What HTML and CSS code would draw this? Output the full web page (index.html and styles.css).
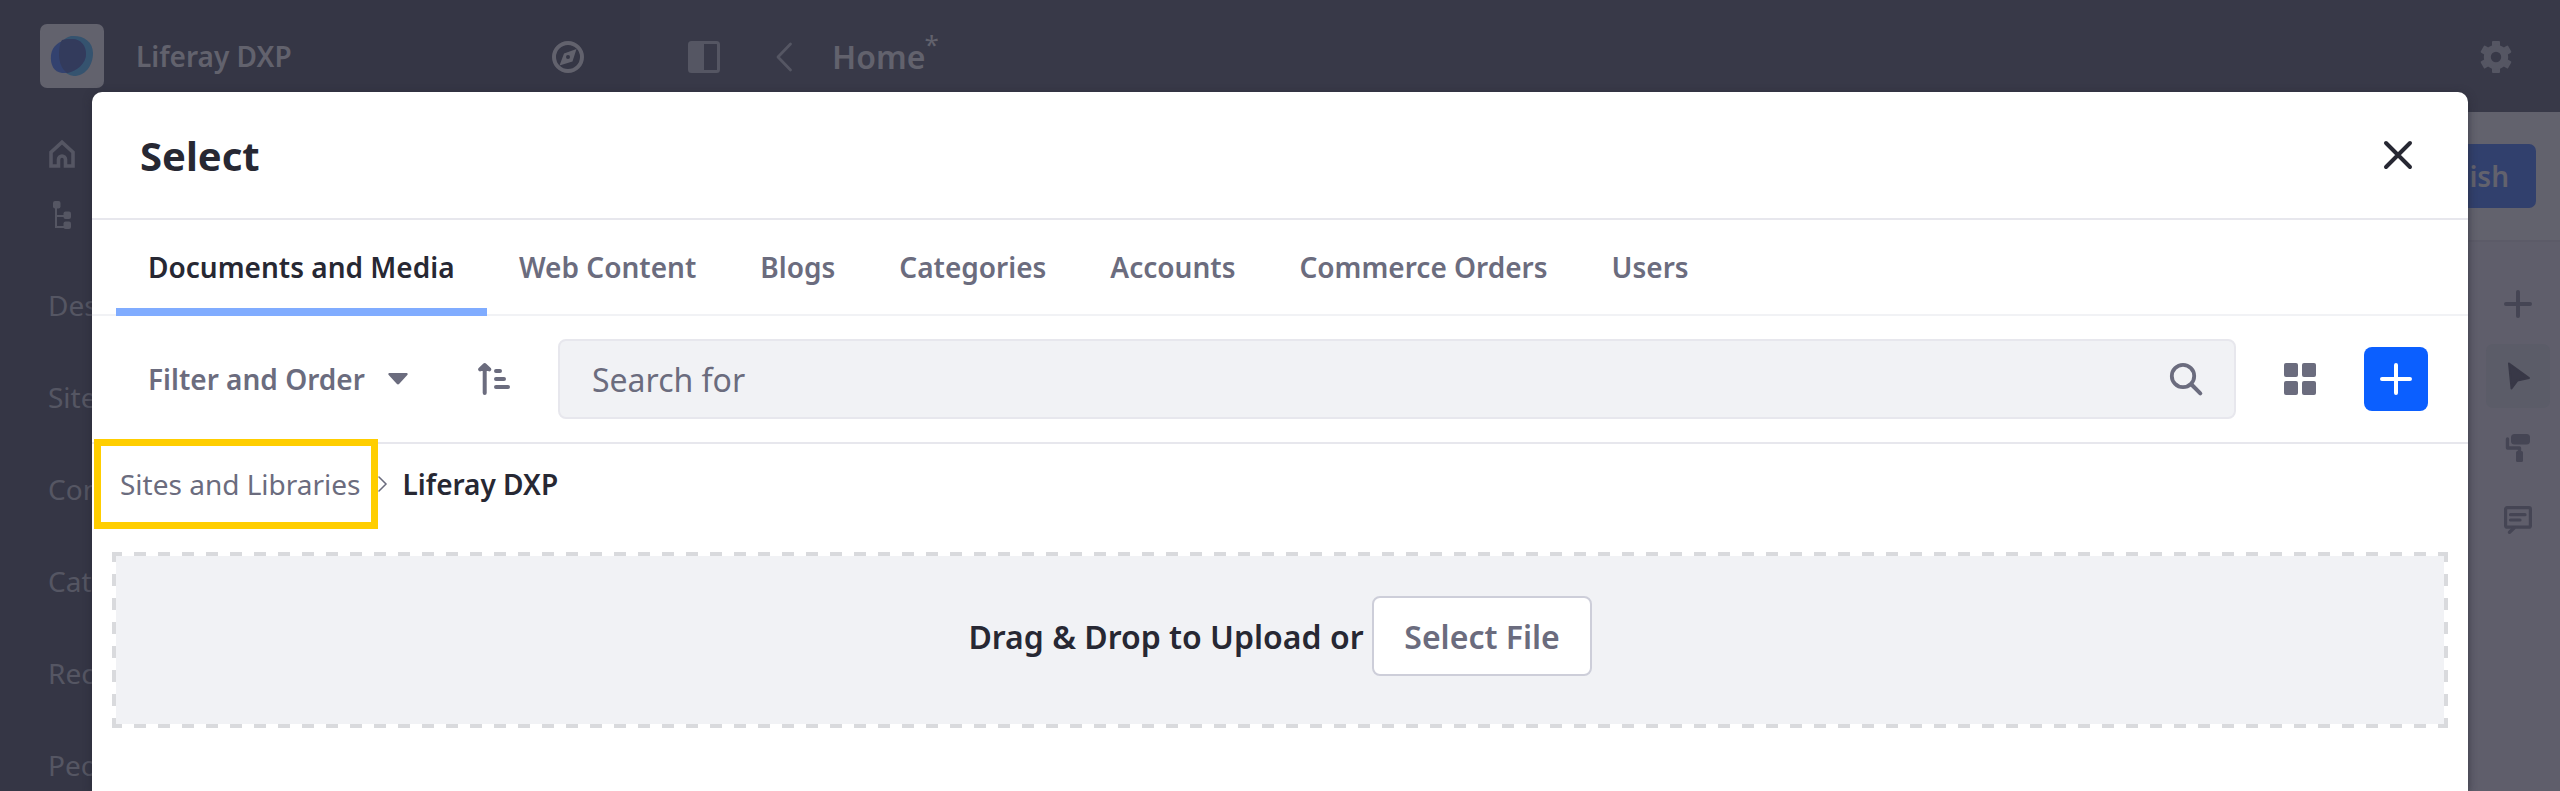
FILE: index.html
```
<!DOCTYPE html>
<html lang="en">
<head>
<meta charset="utf-8">
<title>Select</title>
<link rel="stylesheet" href="styles.css">
</head>
<body>
<div class="app">
  <aside class="sidebar">
    <div class="brand">
      <span class="logo">
        <svg width="44" height="42" viewBox="0 0 44 42"><path d="M21 1C33 0 43 6 43 18C43 31 35 41 24 41C14 40 8 31 9 19C9 9 13 3 21 1Z" fill="#35536f"/><path d="M20 4C30 3 36 10 36 19C36 30 23 39 12 38C4 37 0 30 1 20C2 11 10 5 20 4Z" fill="#33426f"/><path d="M12 5C15 4 18 4 20 4C30 3 36 10 36 19C36 28 27 36 17 38C11 33 9 26 9 19C9 13 10 8 12 5Z" fill="#333b5c"/></svg>
      </span>
      <span class="brand-name">Liferay DXP</span>
      <svg class="compass" width="32" height="32" viewBox="0 0 32 32"><circle cx="16" cy="16" r="14" fill="none" stroke="currentColor" stroke-width="4"/><path fill-rule="evenodd" fill="currentColor" d="M24.5 8L20.5 20.5L7.5 24.500L12 12.500ZM16 14a2 2 0 1 0 0 4a2 2 0 0 0 0-4Z"/></svg>
    </div>
    <div class="side-icons">
      <svg width="26" height="28" viewBox="0 0 26 28"><path d="M2 26V12.200L13 2.200L24 12.200V26H16.500V19.500a3.500 3.500 0 0 0-7 0V26Z" fill="none" stroke="currentColor" stroke-width="3.600"/></svg>
      <svg width="26" height="28" viewBox="0 0 26 28"><g fill="currentColor"><rect x="4" y="0" width="7.500" height="7.500" rx="2"/><rect x="14.500" y="10.500" width="7.500" height="7.500" rx="2"/><rect x="14.500" y="20.500" width="7.500" height="7.500" rx="2"/></g><path d="M7 6V26H16M7 15H16" fill="none" stroke="currentColor" stroke-width="2"/></svg>
    </div>
    <nav class="side-nav">
      <span>Des</span><span>Site</span><span>Con</span><span>Cat</span><span>Rec</span><span>Peo</span>
    </nav>
  </aside>
  <main class="main">
    <header class="topbar">
      <svg width="32" height="32" viewBox="0 0 32 32"><rect x="1.500" y="1.500" width="29" height="29" rx="2" fill="none" stroke="currentColor" stroke-width="3"/><path d="M2 2H16V30H2Z" fill="currentColor"/></svg>
      <svg class="back" width="16" height="30" viewBox="0 0 16 30"><path d="M14.500 2L2 15L14.500 28" fill="none" stroke="currentColor" stroke-width="2.800" stroke-linecap="round" stroke-linejoin="round"/></svg>
      <span class="page-title">Home</span><span class="star">*</span>
      <svg class="gear" width="32" height="32" viewBox="0 0 32 32"><path d="M13 1H19V7H13ZM13 25H19V31H13ZM1.700 10.800L4.700 5.600L9.900 8.600L6.900 13.800ZM22.100 23.400L25.100 18.200L30.300 21.200L27.300 26.400ZM4.700 26.400L1.700 21.200L6.900 18.200L9.900 23.400ZM25.100 13.800L22.100 8.600L27.300 5.600L30.300 10.800Z" fill="currentColor" stroke="currentColor" stroke-width="2" stroke-linejoin="round"/><circle cx="16" cy="16" r="8.700" fill="none" stroke="currentColor" stroke-width="7"/></svg>
    </header>
    <div class="actions"><span class="publish">ish</span></div>
    <div class="rail">
      <span class="tool"><svg width="28" height="28" viewBox="0 0 28 28"><path d="M14 2V26M2 14H26" stroke="currentColor" stroke-width="4" stroke-linecap="round"/></svg></span>
      <span class="tool selected"><svg width="28" height="28" viewBox="0 0 28 28"><path d="M5 1.500L25 16L13.500 18.500L7.500 26.500Z" fill="currentColor" stroke="currentColor" stroke-width="2" stroke-linejoin="round"/></svg></span>
      <span class="tool"><svg width="28" height="28" viewBox="0 0 28 28"><g fill="currentColor"><rect x="7" y="0" width="19" height="10.500" rx="3.500"/><rect x="12" y="17" width="7" height="11" rx="1.500"/></g><path d="M3.500 5V14H15.500V19" fill="none" stroke="currentColor" stroke-width="3.400" stroke-linecap="round" stroke-linejoin="round"/></svg></span>
      <span class="tool"><svg width="28" height="28" viewBox="0 0 28 28"><g fill="none" stroke="currentColor" stroke-linecap="round"><rect x="1.600" y="1.600" width="24.800" height="19.600" rx="1.500" stroke-width="3.200"/><path d="M6.500 8.700H21M6.500 14H16" stroke-width="3.200"/><path d="M10 22L5.500 26.300" stroke-width="3.400"/></g></svg></span>
    </div>
  </main>
</div>

<section class="modal">
  <header class="modal-header">
    <h1>Select</h1>
    <svg width="28" height="28" viewBox="0 0 28 28"><path d="M2 2L26 26M26 2L2 26" stroke="currentColor" stroke-width="4" stroke-linecap="round"/></svg>
  </header>
  <nav class="tabs">
    <span class="tab active">Documents and Media</span><span class="tab">Web Content</span><span class="tab">Blogs</span><span class="tab">Categories</span><span class="tab">Accounts</span><span class="tab">Commerce Orders</span><span class="tab">Users</span>
  </nav>
  <div class="toolbar">
    <div class="filter"><span>Filter and Order</span>
      <svg width="20" height="12" viewBox="0 0 20 12"><path d="M1 0H19Q20.500 .8 19.300 2L11.300 10.800Q10 12.200 8.700 10.800L.7 2Q-.5 .8 1 0Z" fill="currentColor"/></svg>
    </div>
    <svg class="sort" width="32" height="32" viewBox="0 0 32 32"><g fill="none" stroke="currentColor" stroke-width="4" stroke-linecap="round"><path d="M6.700 3V30M18 8H22M18 16H26M18 24H30"/></g><path d="M6.700 0Q7.600 0 8.500 .9L13 5.300Q14 7 12.500 8Q11.500 8.800 10 8H3.400Q1.900 8.800 .9 8Q-.6 7 .4 5.300L4.900 .9Q5.800 0 6.700 0Z" fill="currentColor"/></svg>
    <div class="search"><span class="placeholder">Search for</span>
      <svg width="32" height="32" viewBox="0 0 32 32"><circle cx="13" cy="13" r="11.200" fill="none" stroke="currentColor" stroke-width="3.800"/><path d="M21.500 21.500L30.300 30.300" stroke="currentColor" stroke-width="4" stroke-linecap="round"/></svg>
    </div>
    <svg class="cards" width="32" height="32" viewBox="0 0 32 32" fill="currentColor"><rect width="14" height="14" rx="2"/><rect x="18" width="14" height="14" rx="2"/><rect y="18" width="14" height="14" rx="2"/><rect x="18" y="18" width="14" height="14" rx="2"/></svg>
    <span class="add"><svg width="32" height="32" viewBox="0 0 32 32"><path d="M16 2V30M2 16H30" stroke="currentColor" stroke-width="4" stroke-linecap="round"/></svg></span>
  </div>
  <div class="crumbs">
    <span class="crumb">Sites and Libraries</span>
    <svg width="9" height="16" viewBox="0 0 9 16"><path d="M1 1L8 8L1 15" fill="none" stroke="currentColor" stroke-width="1.500" stroke-linecap="round"/></svg>
    <span class="current">Liferay DXP</span>
    <span class="highlight"></span>
  </div>
  <div class="dropzone"><span class="drop-label">Drag &amp; Drop to Upload or</span><span class="select-file">Select File</span></div>
</section>
</body>
</html>
```
FILE: styles.css
```
* { box-sizing: border-box; }
body {
  margin: 0;
  width: 2560px;
  height: 791px;
  overflow: hidden;
  position: relative;
  font-family: "Noto Sans", sans-serif;
  font-size: 28px;
  line-height: 42px;
}
svg { display: block; flex: none; overflow: visible; }
.app { display: flex; height: 791px; }

.sidebar { width: 640px; background: #353645; color: #555663; }
.brand { display: flex; align-items: center; height: 112px; padding-left: 40px; color: #62626d; }
.logo { display: flex; align-items: center; justify-content: center; width: 64px; height: 64px; border-radius: 7px; background: #62626d; }
.brand-name { width: 448px; padding-left: 32px; font-weight: 600; white-space: nowrap; }
.compass { margin-top: 2px; }
.side-icons { display: flex; flex-direction: column; gap: 33px; padding: 28px 0 0 49px; }
.side-nav { display: flex; flex-direction: column; gap: 50px; padding: 55px 0 0 48px; }

.main { display: flex; flex-direction: column; flex: 1; background: #5f5e6b; }
.topbar { display: flex; align-items: center; height: 112px; padding: 2px 48px 0 48px; background: #383948; color: #555663; }
.back { margin-left: 56px; }
.page-title { margin-left: 40px; font-size: 32px; font-weight: 600; color: #62626d; }
.star { margin: -26px 0 0 -1px; font-size: 26px; color: #62626d; }
.gear { margin-left: auto; }
.actions { display: flex; justify-content: flex-end; height: 130px; padding: 32px 24px; background: #62626d; border-bottom: 2px solid #5c5b68; }
.publish { width: 140px; height: 64px; padding: 11px 27px; text-align: right; font-weight: 600; color: #62626d; background: #31406d; border-radius: 7px; }
.rail { display: flex; flex-direction: column; align-items: flex-end; gap: 8px; padding: 30px 10px 0 0; color: #454554; }
.tool { display: flex; align-items: center; justify-content: center; width: 64px; height: 64px; border-radius: 7px; }
.tool.selected { background: #5b5c68; color: #383847; }

.modal {
  position: absolute;
  left: 92px;
  top: 92px;
  width: 2376px;
  height: 699px;
  background: #fff;
  border-radius: 10px 10px 0 0;
  box-shadow: 0 2px 8px rgba(39, 40, 51, .7);
  color: #272833;
}
.modal-header { display: flex; align-items: center; justify-content: space-between; height: 128px; padding: 0 56px 0 48px; border-bottom: 2px solid #e7e7ed; }
h1 { margin: 2px 0 0; font-size: 40px; line-height: 60px; font-weight: 700; }
.tabs { display: flex; height: 96px; padding-left: 24px; border-bottom: 2px solid #f1f2f5; }
.tab { height: 96px; padding: 26px 32px 0; font-weight: 600; color: #6b6c7e; white-space: nowrap; }
.tab.active { width: 371px; color: #272833; border-bottom: 8px solid #80acff; }
.toolbar { display: flex; align-items: center; height: 128px; padding: 0 40px 0 56px; color: #6b6c7e; border-bottom: 2px solid #e7e7ed; }
.filter { display: flex; align-items: center; width: 330px; gap: 23px; font-weight: 600; white-space: nowrap; }
.search { display: flex; align-items: center; justify-content: space-between; width: 1678px; height: 80px; margin-left: 48px; padding: 0 32px; font-size: 32px; background: #f1f2f5; border: 2px solid #e7e7ed; border-radius: 8px; }
.placeholder { margin-top: 2px; }
.cards { margin-left: 48px; }
.add { display: flex; align-items: center; justify-content: center; width: 64px; height: 64px; margin-left: auto; color: #fff; background: #0b5fff; border-radius: 8px; }
.crumbs { position: relative; display: flex; align-items: center; height: 84px; padding: 0 0 4px 28px; color: #6b6c7e; white-space: nowrap; }
.crumbs svg { margin: 0 16px 0 17px; }
.current { font-weight: 600; color: #272833; }
.highlight { position: absolute; left: 1.500px; top: -5.500px; width: 284px; height: 90px; border: 7px solid #ffce00; }

/* Dashed frame: 12px dashes with 12px gaps, shortened to 10px at the corners */
.dropzone {
  --dashes: #d9dadd 0 10px, #fff 10px 22px, #d9dadd 22px 24px;
  display: flex;
  align-items: center;
  justify-content: center;
  gap: 8px;
  width: 2336px;
  height: 176px;
  margin: 24px 0 0 20px;
  font-size: 32px;
  font-weight: 600;
  background:
    repeating-linear-gradient(90deg, var(--dashes)) top / 100% 4px no-repeat,
    repeating-linear-gradient(90deg, var(--dashes)) bottom / 100% 4px no-repeat,
    repeating-linear-gradient(180deg, var(--dashes)) left / 4px 100% no-repeat,
    repeating-linear-gradient(180deg, var(--dashes)) right / 4px 100% no-repeat,
    #f1f2f5;
}
.drop-label { margin-top: -6px; }
.select-file { display: flex; align-items: center; justify-content: center; width: 220px; height: 80px; margin-top: -8px; padding: 1px 0 0 1px; color: #6b6c7e; background: #fff; border: 2px solid #cdced9; border-radius: 8px; }
```
